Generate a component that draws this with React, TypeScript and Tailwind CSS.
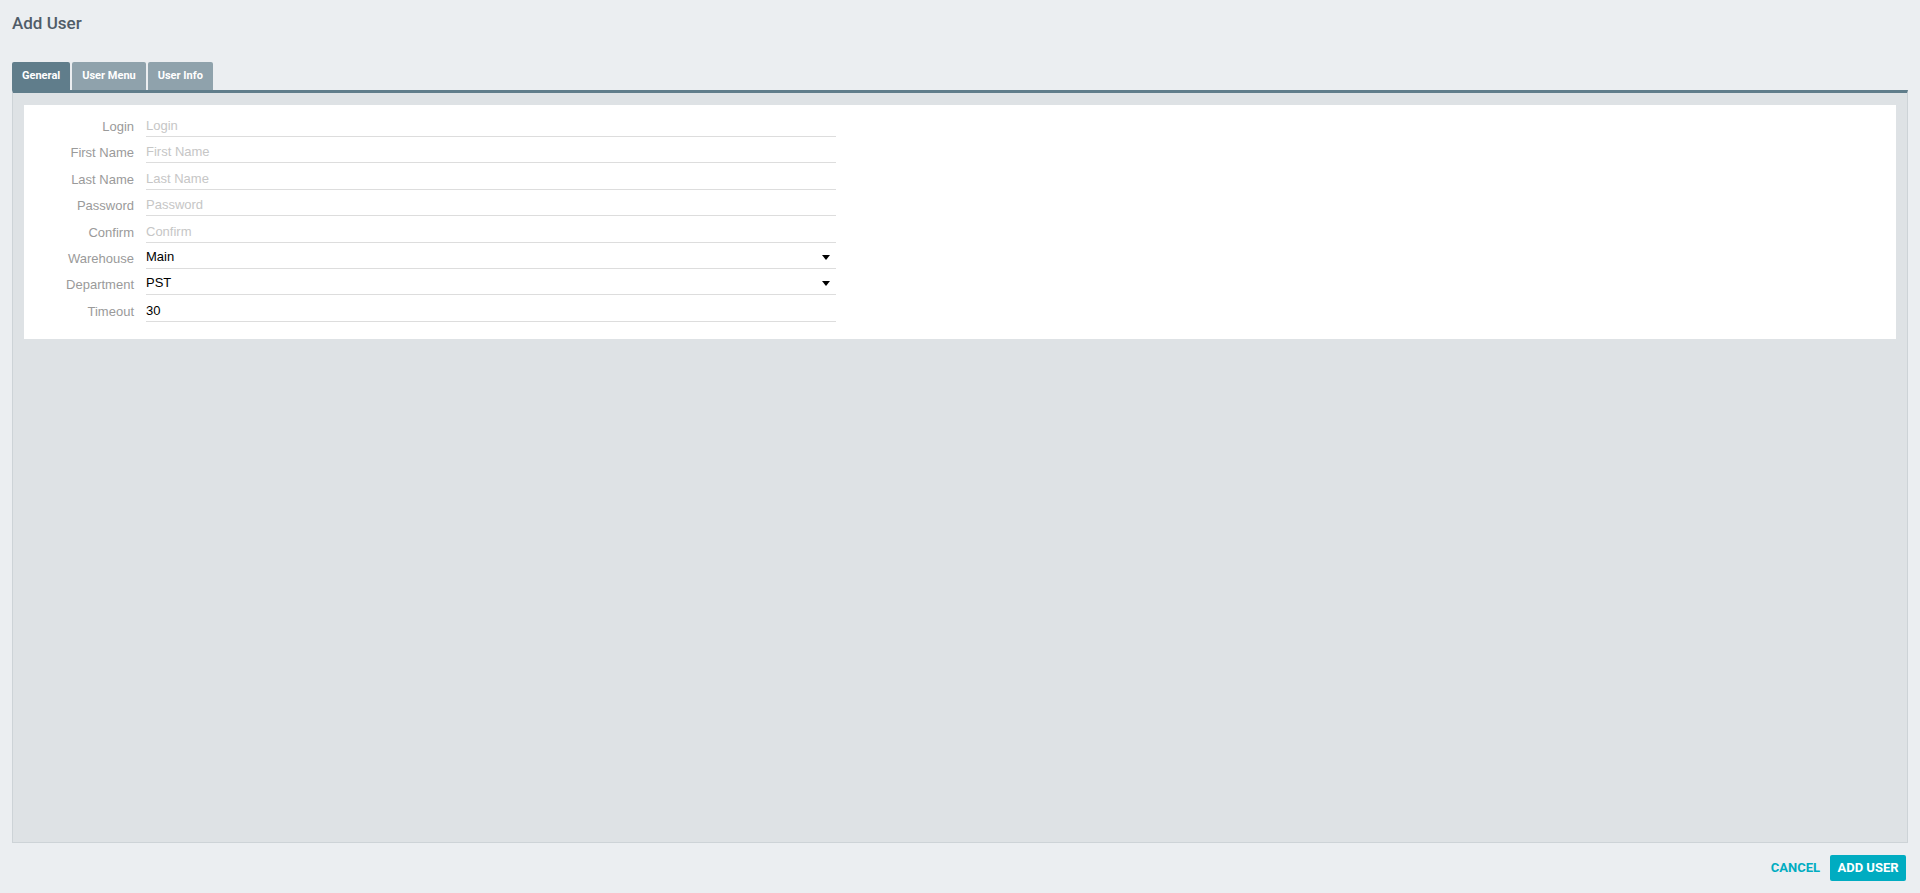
import { useState } from 'react';

const tabs = ['General', 'User Menu', 'User Info'];

type Field = {
  label: string;
  placeholder?: string;
  value?: string;
  select?: boolean;
  type?: string;
};

const fields: Field[] = [
  { label: 'Login', placeholder: 'Login' },
  { label: 'First Name', placeholder: 'First Name' },
  { label: 'Last Name', placeholder: 'Last Name' },
  { label: 'Password', placeholder: 'Password', type: 'password' },
  { label: 'Confirm', placeholder: 'Confirm', type: 'password' },
  { label: 'Warehouse', value: 'Main', select: true },
  { label: 'Department', value: 'PST', select: true },
  { label: 'Timeout', value: '30' },
];

const FormRow = ({ field }: { field: Field }) => {
  return (
    <div className="flex items-end">
      <label className="w-[110px] shrink-0 pb-[3px] text-right text-[13px] leading-[15px] text-[#9a9a9a]">
        {field.label}
      </label>
      <div className="relative ml-3 flex h-[23px] w-[690px] items-end border-b border-[#dddddd]">
        {field.select ? (
          <>
            <span className="pb-[4px] text-[13px] leading-[15px] text-black">{field.value}</span>
            <span className="absolute right-[6px] top-[9px] h-0 w-0 border-x-4 border-t-[5px] border-x-transparent border-t-black" />
          </>
        ) : (
          <input
            type={field.type ?? 'text'}
            defaultValue={field.value}
            placeholder={field.placeholder}
            className="h-full w-full bg-transparent pt-[2px] pb-[1px] text-[13px] leading-[15px] text-black outline-none placeholder:text-[#c6c6c6]"
          />
        )}
      </div>
    </div>
  );
};

const App = () => {
  const [active, setActive] = useState(0);

  return (
    <div className="flex h-[893px] flex-col bg-[#ebeef1] px-3 font-['Roboto',sans-serif]">
      <h1 className="pt-[11px] text-[17px] font-medium leading-6 text-[#505c68]">Add User</h1>

      {/* Tabs */}
      <div className="mt-[27px] flex gap-[2px]">
        {tabs.map((tab, i) => (
          <button
            key={tab}
            onClick={() => setActive(i)}
            className={
              i === active
                ? 'h-7 rounded-t-[2px] bg-[#607d8b] px-[10px] text-[11px] font-bold text-white'
                : 'h-7 rounded-t-[2px] bg-[#8fa2ac] px-[10px] text-[11px] font-bold text-white'
            }
          >
            {tab}
          </button>
        ))}
      </div>

      {/* Panel */}
      <div className="min-h-0 flex-1 border border-t-[3px] border-[#cdd3d7] border-t-[#607d8b] bg-[#dee2e5] px-[11px] pt-3">
        <div className="flex flex-col gap-[3.4px] bg-white pt-[9px] pb-[17px] font-['Liberation_Sans',Arial,sans-serif]">
          {fields.map((f) => (
            <FormRow key={f.label} field={f} />
          ))}
        </div>
      </div>

      {/* Footer */}
      <div className="mt-3 mb-3 flex items-center justify-end gap-[10px] pr-[2px]">
        <button className="h-[26px] text-[13px] font-bold text-[#00acc1]">CANCEL</button>
        <button className="h-[26px] w-[76px] rounded-[2px] bg-[#00acc1] text-[13px] font-bold text-white">
          ADD USER
        </button>
      </div>
    </div>
  );
};

export default App;
